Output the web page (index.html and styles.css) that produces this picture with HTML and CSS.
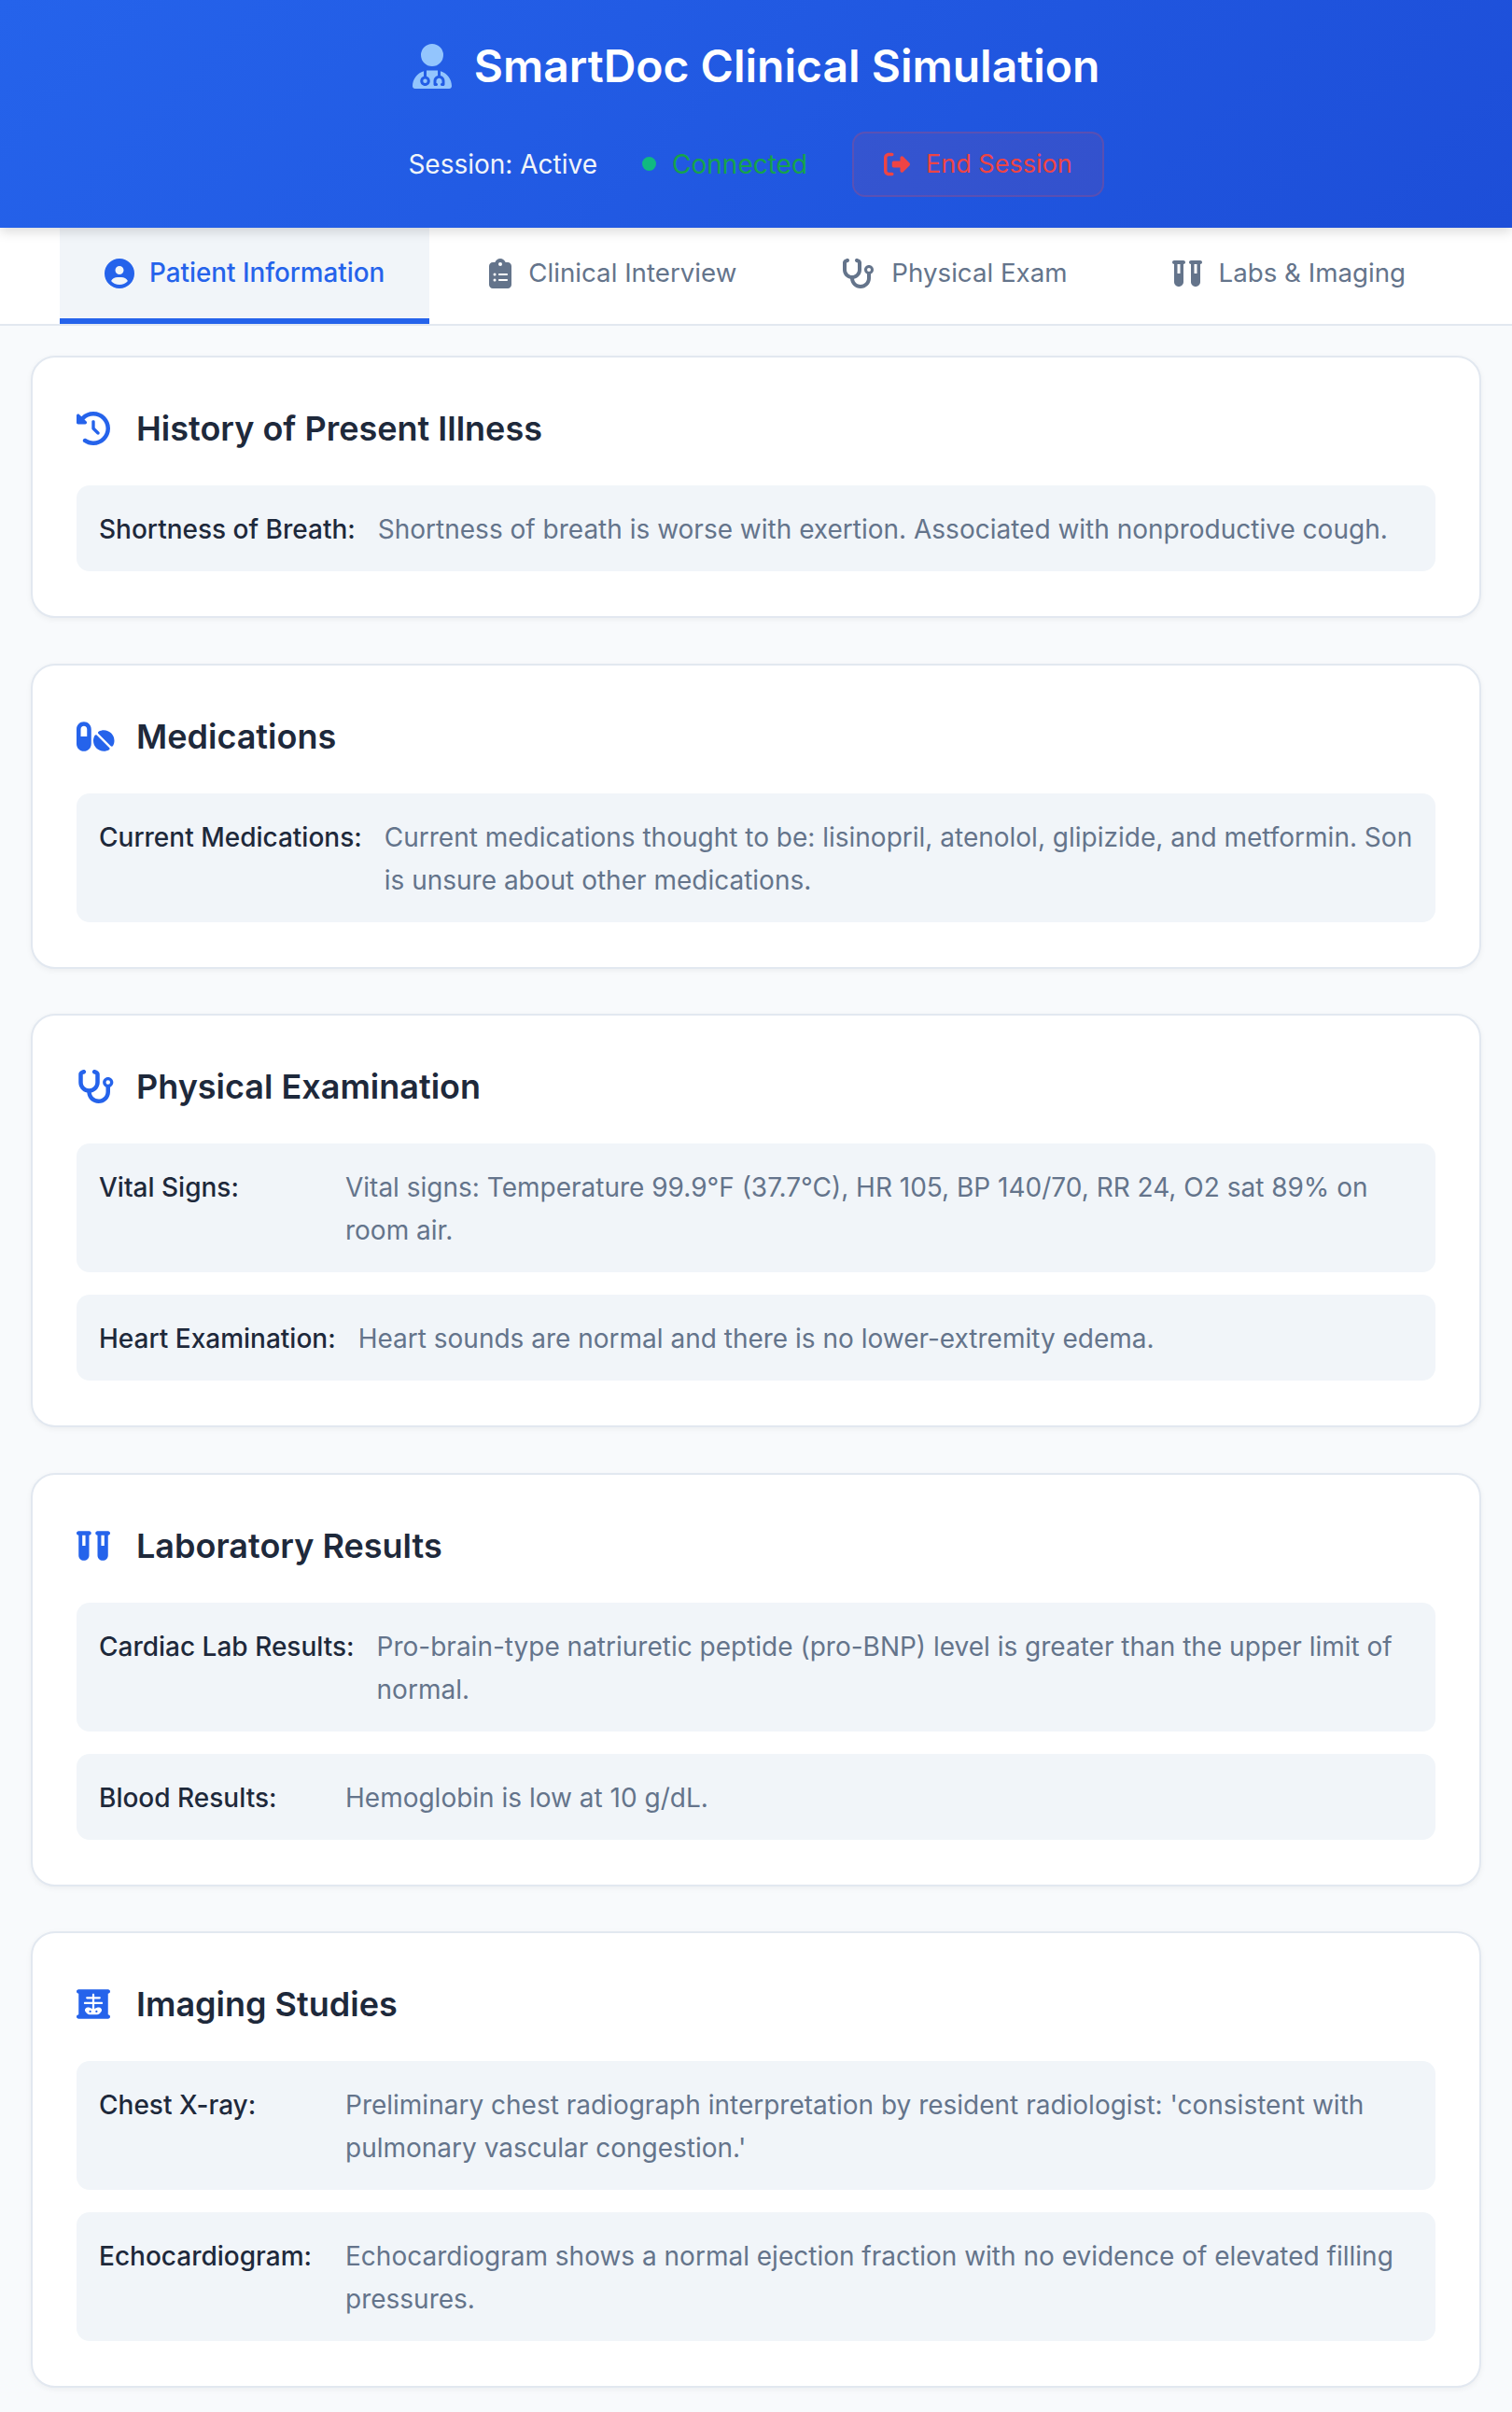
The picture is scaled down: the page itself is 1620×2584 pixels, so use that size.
FILE: index.html
```html
<!DOCTYPE html>
<html lang="en">
<head>
    <meta charset="UTF-8">
    <title>SmartDoc Clinical Simulation</title>
    <meta name="viewport" content="width=device-width, initial-scale=1">
    <link rel="stylesheet" href="styles.css">
</head>
<body>
    <header class="app-header">
        <h1 class="app-title">
            <svg class="title-icon" viewBox="0 0 448 512"><path d="M224 256A128 128 0 1 0 224 0a128 128 0 1 0 0 256zm-96 55.2C54 332.9 0 401.3 0 482.3C0 498.7 13.3 512 29.7 512H418.3c16.4 0 29.7-13.3 29.7-29.7c0-81-54-149.4-128-171.1V362c27.6 7.1 48 32.2 48 62v40c0 8.8-7.2 16-16 16H336c-8.8 0-16-7.2-16-16s7.2-16 16-16V424c0-17.7-14.3-32-32-32s-32 14.3-32 32v24c8.8 0 16 7.2 16 16s-7.2 16-16 16H256c-8.8 0-16-7.2-16-16V424c0-29.8 20.4-54.9 48-62V304.9c-6-.6-12.1-.9-18.3-.9H178.3c-6.2 0-12.3 .3-18.3 .9v65.4c23.1 6.9 40 28.3 40 53.7c0 30.9-25.1 56-56 56s-56-25.1-56-56c0-25.4 16.9-46.8 40-53.7V311.2zM144 448a24 24 0 1 0 0-48 24 24 0 1 0 0 48z"/></svg>
            SmartDoc Clinical Simulation
        </h1>
        <div class="session-bar">
            <span class="session-status">Session: Active</span>
            <span class="connection"><span class="connection-dot"></span>Connected</span>
            <button class="end-btn">
                <svg class="end-icon" viewBox="0 0 512 512"><path d="M377.9 105.9L500.7 228.7c7.2 7.2 11.3 17.1 11.3 27.3s-4.1 20.1-11.3 27.3L377.9 406.1c-6.4 6.4-15 9.9-24 9.9c-18.7 0-33.9-15.2-33.9-33.9l0-62.1-128 0c-17.7 0-32-14.3-32-32l0-64c0-17.7 14.3-32 32-32l128 0 0-62.1c0-18.7 15.2-33.9 33.9-33.9c9 0 17.6 3.6 24 9.9zM160 96L96 96c-17.7 0-32 14.3-32 32l0 256c0 17.7 14.3 32 32 32l64 0c17.7 0 32 14.3 32 32s-14.3 32-32 32l-64 0c-53 0-96-43-96-96L0 128C0 75 43 32 96 32l64 0c17.7 0 32 14.3 32 32s-14.3 32-32 32z"/></svg>
                End Session
            </button>
        </div>
    </header>

    <nav class="tabs">
        <a class="tab tab-active">
            <svg class="tab-icon" viewBox="0 0 512 512"><path d="M399 384.2C376.9 345.8 335.4 320 288 320H224c-47.4 0-88.9 25.8-111 64.2c35.2 39.2 86.2 63.8 143 63.8s107.8-24.7 143-63.8zM0 256a256 256 0 1 1 512 0A256 256 0 1 1 0 256zm256 16a72 72 0 1 0 0-144 72 72 0 1 0 0 144z"/></svg>
            Patient Information
        </a>
        <a class="tab">
            <svg class="tab-icon" viewBox="0 0 384 512"><path d="M192 0c-41.8 0-77.4 26.7-90.5 64H64C28.7 64 0 92.7 0 128V448c0 35.3 28.7 64 64 64H320c35.3 0 64-28.7 64-64V128c0-35.3-28.7-64-64-64H282.5C269.4 26.7 233.8 0 192 0zm0 64a32 32 0 1 1 0 64 32 32 0 1 1 0-64zM72 272a24 24 0 1 1 48 0 24 24 0 1 1 -48 0zm104-16H304c8.8 0 16 7.2 16 16s-7.2 16-16 16H176c-8.8 0-16-7.2-16-16s7.2-16 16-16zM72 368a24 24 0 1 1 48 0 24 24 0 1 1 -48 0zm88 0c0-8.8 7.2-16 16-16H304c8.8 0 16 7.2 16 16s-7.2 16-16 16H176c-8.8 0-16-7.2-16-16z"/></svg>
            Clinical Interview
        </a>
        <a class="tab">
            <svg class="tab-icon" viewBox="0 0 576 512"><path d="M142.4 21.9c5.6 16.8-3.5 34.9-20.2 40.5L96 71.1V192c0 53 43 96 96 96s96-43 96-96V71.1l-26.1-8.7c-16.8-5.6-25.8-23.7-20.2-40.5s23.7-25.8 40.5-20.2l26.1 8.7C334.4 19.1 352 43.5 352 71.1V192c0 77.2-54.6 141.6-127.3 156.7C231 404.6 278.4 448 336 448c61.9 0 112-50.1 112-112V265.3c-28.3-12.3-48-40.5-48-73.3c0-44.2 35.8-80 80-80s80 35.8 80 80c0 32.8-19.7 61-48 73.3V336c0 97.2-78.8 176-176 176c-92.9 0-168.9-71.9-175.5-163.1C87.2 334.2 32 269.6 32 192V71.1c0-27.5 17.6-52 43.8-60.7l26.1-8.7c16.8-5.6 34.9 3.5 40.5 20.2zM480 224a32 32 0 1 0 0-64 32 32 0 1 0 0 64z"/></svg>
            Physical Exam
        </a>
        <a class="tab">
            <svg class="tab-icon" viewBox="0 0 512 512"><path d="M0 64C0 46.3 14.3 32 32 32H88h48 56c17.7 0 32 14.3 32 32s-14.3 32-32 32V400c0 44.2-35.8 80-80 80s-80-35.8-80-80V96C14.3 96 0 81.7 0 64zM136 96H88V256h48V96zM288 64c0-17.7 14.3-32 32-32h56 48 56c17.7 0 32 14.3 32 32s-14.3 32-32 32V400c0 44.2-35.8 80-80 80s-80-35.8-80-80V96c-17.7 0-32-14.3-32-32zM424 96H376V256h48V96z"/></svg>
            Labs &amp; Imaging
        </a>
    </nav>

    <main class="content">
        <section class="card">
            <h2 class="card-title">
                <span class="card-icon"><svg viewBox="0 0 512 512"><path d="M75 75L41 41C25.9 25.9 0 36.6 0 57.9V168c0 13.3 10.7 24 24 24H134.1c21.4 0 32.1-25.9 17-41l-30.8-30.8C155 85.5 203 64 256 64c106 0 192 86 192 192s-86 192-192 192c-40.8 0-78.6-12.7-109.7-34.4c-14.5-10.1-34.4-6.6-44.6 7.9s-6.6 34.4 7.9 44.6C151.2 495 201.7 512 256 512c141.4 0 256-114.6 256-256S397.4 0 256 0C185.3 0 121.3 28.7 75 75zm181 53c-13.3 0-24 10.7-24 24V256c0 6.4 2.5 12.5 7 17l72 72c9.4 9.4 24.6 9.4 33.9 0s9.4-24.6 0-33.9l-65-65V152c0-13.3-10.7-24-24-24z"/></svg></span>
                History of Present Illness
            </h2>
            <div class="info-item">
                <span class="info-label">Shortness of Breath:</span>
                <span class="info-value">Shortness of breath is worse with exertion. Associated with nonproductive cough.</span>
            </div>
        </section>

        <section class="card">
            <h2 class="card-title">
                <span class="card-icon"><svg viewBox="0 0 576 512"><path d="M112 96c-26.5 0-48 21.5-48 48V256h96V144c0-26.5-21.5-48-48-48zM0 144C0 82.1 50.1 32 112 32s112 50.1 112 112V368c0 61.9-50.1 112-112 112S0 429.9 0 368V144zM554.9 399.4c-7.1 12.3-23.7 13.1-33.8 3.1L333.5 214.9c-10-10-9.3-26.7 3.1-33.8C360 167.7 387.1 160 416 160c88.4 0 160 71.6 160 160c0 28.9-7.7 56-21.1 79.4zm-59.5 59.5C472 472.3 444.9 480 416 480c-88.4 0-160-71.6-160-160c0-28.9 7.7-56 21.1-79.4c7.1-12.3 23.7-13.1 33.8-3.1L498.5 425.1c10 10 9.3 26.7-3.1 33.8z"/></svg></span>
                Medications
            </h2>
            <div class="info-item">
                <span class="info-label">Current Medications:</span>
                <span class="info-value">Current medications thought to be: lisinopril, atenolol, glipizide, and metformin. Son is unsure about other medications.</span>
            </div>
        </section>

        <section class="card">
            <h2 class="card-title">
                <span class="card-icon"><svg viewBox="0 0 576 512"><path d="M142.4 21.9c5.6 16.8-3.5 34.9-20.2 40.5L96 71.1V192c0 53 43 96 96 96s96-43 96-96V71.1l-26.1-8.7c-16.8-5.6-25.8-23.7-20.2-40.5s23.7-25.8 40.5-20.2l26.1 8.7C334.4 19.1 352 43.5 352 71.1V192c0 77.2-54.6 141.6-127.3 156.7C231 404.6 278.4 448 336 448c61.9 0 112-50.1 112-112V265.3c-28.3-12.3-48-40.5-48-73.3c0-44.2 35.8-80 80-80s80 35.8 80 80c0 32.8-19.7 61-48 73.3V336c0 97.2-78.8 176-176 176c-92.9 0-168.9-71.9-175.5-163.1C87.2 334.2 32 269.6 32 192V71.1c0-27.5 17.6-52 43.8-60.7l26.1-8.7c16.8-5.6 34.9 3.5 40.5 20.2zM480 224a32 32 0 1 0 0-64 32 32 0 1 0 0 64z"/></svg></span>
                Physical Examination
            </h2>
            <div class="info-item">
                <span class="info-label">Vital Signs:</span>
                <span class="info-value">Vital signs: Temperature 99.9°F (37.7°C), HR 105, BP 140/70, RR 24, O2 sat 89% on room air.</span>
            </div>
            <div class="info-item">
                <span class="info-label">Heart Examination:</span>
                <span class="info-value">Heart sounds are normal and there is no lower-extremity edema.</span>
            </div>
        </section>

        <section class="card">
            <h2 class="card-title">
                <span class="card-icon"><svg viewBox="0 0 512 512"><path d="M0 64C0 46.3 14.3 32 32 32H88h48 56c17.7 0 32 14.3 32 32s-14.3 32-32 32V400c0 44.2-35.8 80-80 80s-80-35.8-80-80V96C14.3 96 0 81.7 0 64zM136 96H88V256h48V96zM288 64c0-17.7 14.3-32 32-32h56 48 56c17.7 0 32 14.3 32 32s-14.3 32-32 32V400c0 44.2-35.8 80-80 80s-80-35.8-80-80V96c-17.7 0-32-14.3-32-32zM424 96H376V256h48V96z"/></svg></span>
                Laboratory Results
            </h2>
            <div class="info-item">
                <span class="info-label">Cardiac Lab Results:</span>
                <span class="info-value">Pro-brain-type natriuretic peptide (pro-BNP) level is greater than the upper limit of normal.</span>
            </div>
            <div class="info-item">
                <span class="info-label">Blood Results:</span>
                <span class="info-value">Hemoglobin is low at 10 g/dL.</span>
            </div>
        </section>

        <section class="card">
            <h2 class="card-title">
                <span class="card-icon"><svg viewBox="0 0 512 512"><path d="M0 64C0 46.3 14.3 32 32 32H480c17.7 0 32 14.3 32 32s-14.3 32-32 32V416c17.7 0 32 14.3 32 32s-14.3 32-32 32H32c-17.7 0-32-14.3-32-32s14.3-32 32-32V96C14.3 96 0 81.7 0 64zM256 96c-8.8 0-16 7.2-16 16v32H160c-8.8 0-16 7.2-16 16s7.2 16 16 16h80v48H128c-8.8 0-16 7.2-16 16s7.2 16 16 16H240v70.6L189.1 307c-5.2-2-10.6-3-16.2-3h-2.1c-23.6 0-42.8 19.2-42.8 42.8c0 9.6 3.2 18.9 9.1 26.4l18.2 23.2c9.7 12.4 24.6 19.6 40.3 19.6H316.4c15.7 0 30.6-7.2 40.3-19.6l18.2-23.2c5.9-7.5 9.1-16.8 9.1-26.4c0-23.6-19.2-42.8-42.8-42.8H339c-5.5 0-11 1-16.2 3L272 326.6V256H384c8.8 0 16-7.2 16-16s-7.2-16-16-16H272V176h80c8.8 0 16-7.2 16-16s-7.2-16-16-16H272V112c0-8.8-7.2-16-16-16zM208 352a16 16 0 1 1 0 32 16 16 0 1 1 0-32zm80 16a16 16 0 1 1 32 0 16 16 0 1 1 -32 0z"/></svg></span>
                Imaging Studies
            </h2>
            <div class="info-item">
                <span class="info-label">Chest X-ray:</span>
                <span class="info-value">Preliminary chest radiograph interpretation by resident radiologist: 'consistent with pulmonary vascular congestion.'</span>
            </div>
            <div class="info-item">
                <span class="info-label">Echocardiogram:</span>
                <span class="info-value">Echocardiogram shows a normal ejection fraction with no evidence of elevated filling pressures.</span>
            </div>
        </section>
    </main>
</body>
</html>
```

FILE: styles.css
```css
* {
    box-sizing: border-box;
}

body {
    margin: 0;
    font-family: Inter, "Liberation Sans", sans-serif;
    font-size: 28px;
    line-height: 1.6;
    background: #f8fafc;
    color: #1e293b;
}

.app-header {
    position: relative;
    z-index: 2;
    height: 244px;
    padding-top: 42px;
    background: linear-gradient(135deg, #2563eb, #1d4ed8);
    box-shadow: 0 4px 12px rgba(0, 0, 0, 0.15);
    color: #fff;
}

.app-title {
    display: flex;
    justify-content: center;
    align-items: center;
    gap: 24px;
    margin: 0 0 41px;
    font-size: 48px;
    font-weight: 600;
    line-height: 58px;
}

.title-icon {
    width: 42px;
    height: 48px;
    fill: #93c5fd;
}

.session-bar {
    display: flex;
    justify-content: center;
    align-items: center;
    gap: 48px;
}

.session-status {
    color: #f1f5f9;
}

.connection {
    display: flex;
    align-items: center;
    gap: 17px;
    color: #16a34a;
}

.connection-dot {
    width: 15px;
    height: 15px;
    border-radius: 50%;
    background: #10b981;
}

.end-btn {
    display: flex;
    align-items: center;
    gap: 17px;
    height: 70px;
    padding: 0 32px;
    border: 2px solid rgba(239, 68, 68, 0.2);
    border-radius: 14px;
    background: rgba(239, 68, 68, 0.1);
    color: #ef4444;
    font: inherit;
    font-size: 27px;
}

.end-icon {
    width: 28px;
    height: 28px;
    fill: currentColor;
}

.tabs {
    display: flex;
    gap: 16px;
    height: 105px;
    padding-left: 64px;
    background: #fff;
    border-bottom: 2px solid #e2e8f0;
}

.tab {
    display: flex;
    align-items: center;
    gap: 18px;
    padding: 0 48px;
    border-bottom: 6px solid transparent;
    color: #64748b;
    font-size: 27.7px;
}

.tab-active {
    gap: 16px;
    background: #f1f5f9;
    border-bottom-color: #2563eb;
    color: #2563eb;
    font-size: 27.8px;
    font-weight: 500;
}

.tab-icon {
    height: 32px;
    fill: currentColor;
}

.content {
    display: flex;
    flex-direction: column;
    gap: 48.5px;
    padding: 32px 33px 26px;
}

.card {
    display: flex;
    flex-direction: column;
    gap: 24px;
    padding: 48px 47px;
    background: #fff;
    border: 2px solid #e2e8f0;
    border-radius: 26px;
    box-shadow: 0 2px 6px rgba(0, 0, 0, 0.05);
}

.card-title {
    display: flex;
    align-items: center;
    margin: 0 0 9px;
    font-size: 36px;
    font-weight: 600;
    line-height: 56px;
}

.card-icon {
    flex: none;
    width: 64px;
    height: 36px;
    display: flex;
}

.card-icon svg {
    height: 36px;
    fill: #2563eb;
}

.info-item {
    display: flex;
    gap: 24px;
    padding: 24px 24px 22px;
    line-height: 46px;
    background: #f1f5f9;
    border-radius: 14px;
}

.info-label {
    flex: none;
    min-width: 240px;
    font-weight: 500;
}

.info-value {
    color: #64748b;
}
```
